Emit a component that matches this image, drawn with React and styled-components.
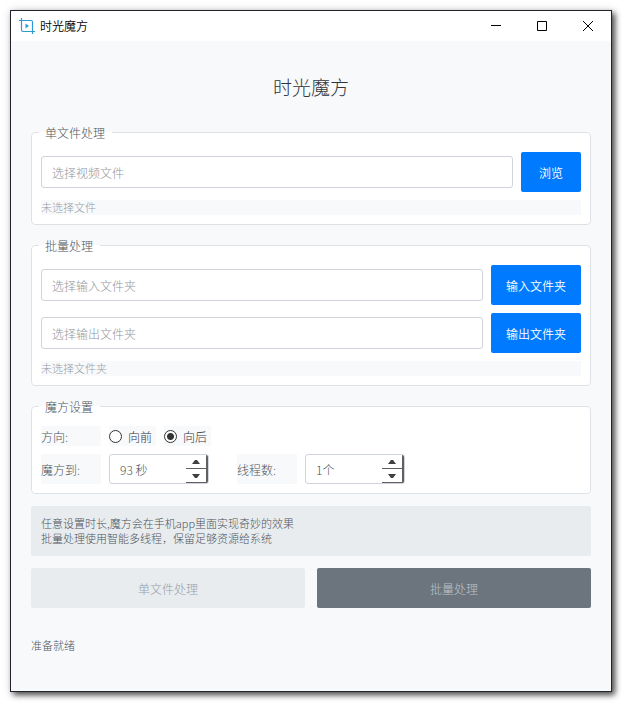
import React, { useId, useState } from "react";
import styled, { createGlobalStyle, css } from "styled-components";

const GlobalStyle = createGlobalStyle`
  *, *::before, *::after { box-sizing: border-box; }
  body { margin: 0; background: #fff; }
  body, button, input {
    font-family: "Noto Sans CJK SC", "Noto Sans", sans-serif;
    font-size: 12px;
    font-weight: 300;
  }
`;

const Desktop = styled.div`
  display: flex;
  min-height: 100vh;
  padding: 10px 11px 11px 10px;
`;

const Window = styled.div`
  display: flex;
  flex-direction: column;
  flex: 1;
  min-width: 0;
  border: 1px solid #23232b;
  background: #f8f9fb;
  box-shadow: 3px 3px 6px rgba(0, 0, 0, 0.7), 0 0 10px rgba(0, 0, 0, 0.1);
`;

const TitleBar = styled.header`
  display: flex;
  align-items: center;
  height: 30px;
  padding-left: 8px;
  background: #fff;
`;

const AppIcon = styled.svg`
  width: 16px;
  height: 16px;
  margin-right: 5px;
  fill: none;
  stroke: #2e9ad2;
`;

const WindowTitle = styled.span`
  flex: 1;
  color: #000;
  font-weight: 350;
  line-height: 16px;
`;

const WindowButton = styled.button`
  display: grid;
  place-items: center;
  width: 46px;
  height: 30px;
  padding: 0;
  border: 0;
  background: none;
  svg {
    width: 12px;
    height: 12px;
    fill: none;
    stroke: #000;
  }
  &:hover { background: #e5e5e5; }
`;

const Content = styled.main`
  display: flex;
  flex-direction: column;
  flex: 1;
  gap: 12px;
  padding: 20px;
`;

const Heading = styled.h1`
  margin: 0;
  padding-top: 1px;
  color: #2f353b;
  font-size: 19px;
  font-weight: 300;
  line-height: 50px;
  text-align: center;
`;

const Group = styled.fieldset`
  min-width: 0;
  margin: 0;
  padding: 0 7px;
  border: 1px solid #dee2e6;
  border-radius: 4px;
  background: #fff;
`;

const GroupTitle = styled.legend`
  padding: 0 7px 0 6px;
  color: #4c545c;
  line-height: 17px;
`;

const GroupBody = styled.div`
  display: flex;
  flex-direction: column;
  gap: 8px;
  padding: 11px 2px 9px;
`;

const Row = styled.div`
  display: flex;
  align-items: center;
  gap: 8px;
`;

const fieldBox = css`
  border: 1px solid #ced4da;
  border-radius: 3px;
  background: #fff;
`;

const PathInput = styled.input`
  ${fieldBox}
  flex: 1;
  min-width: 0;
  height: 32px;
  padding: 0 10px;
  color: #495057;
  &::placeholder { color: #92969a; opacity: 1; }
`;

const PickButton = styled.button`
  min-width: 60px;
  height: 40px;
  padding: 0 15px;
  border: 0;
  border-radius: 2px;
  background: #007bff;
  color: #fff;
  font-weight: 350;
`;

const Hint = styled.output`
  display: block;
  background: #f8f9fb;
  color: #959da6;
  font-size: 11px;
  line-height: 15px;
`;

const FieldLabel = styled.label`
  display: flex;
  align-items: center;
  align-self: stretch;
  width: 60px;
  background: #f8f9fb;
  color: #4c545c;
`;

const RadioLabel = styled.label`
  display: flex;
  align-items: center;
  gap: 6px;
  height: 20px;
  padding-right: 4px;
  background: #f8f9fb;
  color: #30363c;
`;

const Radio = styled.input`
  appearance: none;
  width: 13px;
  height: 13px;
  margin: 0;
  border: 1px solid #333;
  border-radius: 50%;
  background: #fff;
  &:checked { background: radial-gradient(circle, #333 3px, #fff 4px); }
`;

const Spinner = styled.div`
  ${fieldBox}
  display: flex;
  width: 100px;
  height: 30px;
  overflow: hidden;
`;

const SpinnerValue = styled.input`
  flex: 1;
  min-width: 0;
  padding: 0 10px;
  border: 0;
  background: none;
  color: #495057;
`;

const SpinnerArrows = styled.div`
  display: grid;
  grid-template-rows: 1fr 1fr;
  width: 22px;
`;

const ArrowButton = styled.button`
  display: grid;
  place-items: center;
  padding: 0;
  border: solid #606060;
  border-width: 0 2px 1px 0;
  background: #fff;
  svg {
    width: 8px;
    height: 4px;
    fill: #404040;
  }
`;

const Spaced = styled.div`
  display: flex;
  gap: 8px;
  height: 30px;
  margin-left: 20px;
`;

const Notice = styled.p`
  margin: 0;
  padding: 10px;
  border-radius: 2px;
  background: #e9ecef;
  color: #4c545c;
  font-size: 11px;
  line-height: 15px;
`;

const Actions = styled.div`
  display: grid;
  grid-template-columns: 1fr 1fr;
  gap: 12px;
`;

const ActionButton = styled.button`
  height: 40px;
  border: 0;
  border-radius: 2px;
  background: ${(p) => (p.$dark ? "#6c757d" : "#e9ecef")};
  color: ${(p) => (p.$dark ? "#bcc3ca" : "#959da6")};
`;

const StatusLine = styled.footer`
  display: flex;
  flex: 1;
  align-items: center;
  color: #4c545c;
  font-size: 11px;
  line-height: 15px;
`;

function PathRow({ placeholder, action }) {
  return (
    <Row>
      <PathInput type="text" placeholder={placeholder} aria-label={placeholder} />
      <PickButton type="button">{action}</PickButton>
    </Row>
  );
}

function NumberField({ label, initial, unit }) {
  const id = useId();
  const [value, setValue] = useState(initial);
  return (
    <>
      <FieldLabel htmlFor={id}>{label}</FieldLabel>
      <Spinner>
        <SpinnerValue
          id={id}
          type="text"
          value={`${value}${unit}`}
          onChange={(e) => setValue(parseInt(e.target.value, 10) || 0)}
        />
        <SpinnerArrows>
          <ArrowButton type="button" aria-label="增加" onClick={() => setValue(value + 1)}>
            <svg viewBox="0 0 8 4"><path d="M0 4 3 0h2l3 4z" /></svg>
          </ArrowButton>
          <ArrowButton
            type="button"
            aria-label="减少"
            onClick={() => setValue(Math.max(1, value - 1))}
          >
            <svg viewBox="0 0 8 4"><path d="M0 0h8L5 4H3z" /></svg>
          </ArrowButton>
        </SpinnerArrows>
      </Spinner>
    </>
  );
}

export default function App() {
  const [direction, setDirection] = useState("向后");
  return (
    <>
      <GlobalStyle />
      <Desktop>
        <Window>
          <TitleBar>
            <AppIcon viewBox="0 0 16 16" aria-hidden="true">
              <path strokeWidth="1.2" d="M0 2.5h12a1.5 1.5 0 0 1 1.5 1.5V16M2.5 0v12A1.5 1.5 0 0 0 4 13.5h12" />
              <path d="M6.5 5.5v5L10 8z" fill="#2e9ad2" stroke="none" />
            </AppIcon>
            <WindowTitle>时光魔方</WindowTitle>
            <WindowButton type="button" aria-label="最小化">
              <svg viewBox="0 0 12 12"><path d="M1 5.5h10" /></svg>
            </WindowButton>
            <WindowButton type="button" aria-label="最大化">
              <svg viewBox="0 0 12 12"><path d="M1.5 1.5h9v9h-9z" /></svg>
            </WindowButton>
            <WindowButton type="button" aria-label="关闭">
              <svg viewBox="0 0 12 12"><path d="m1 1 10 10M11 1 1 11" /></svg>
            </WindowButton>
          </TitleBar>
          <Content>
            <Heading>时光魔方</Heading>

            <Group>
              <GroupTitle>单文件处理</GroupTitle>
              <GroupBody>
                <PathRow placeholder="选择视频文件" action="浏览" />
                <Hint>未选择文件</Hint>
              </GroupBody>
            </Group>

            <Group>
              <GroupTitle>批量处理</GroupTitle>
              <GroupBody>
                <PathRow placeholder="选择输入文件夹" action="输入文件夹" />
                <PathRow placeholder="选择输出文件夹" action="输出文件夹" />
                <Hint>未选择文件夹</Hint>
              </GroupBody>
            </Group>

            <Group>
              <GroupTitle>魔方设置</GroupTitle>
              <GroupBody>
                <Row role="radiogroup" aria-labelledby="direction-label">
                  <FieldLabel as="span" id="direction-label">方向:</FieldLabel>
                  {["向前", "向后"].map((name) => (
                    <RadioLabel key={name}>
                      <Radio
                        type="radio"
                        name="direction"
                        checked={direction === name}
                        onChange={() => setDirection(name)}
                      />
                      {name}
                    </RadioLabel>
                  ))}
                </Row>
                <Row>
                  <NumberField label="魔方到:" initial={93} unit=" 秒" />
                  <Spaced>
                    <NumberField label="线程数:" initial={1} unit="个" />
                  </Spaced>
                </Row>
              </GroupBody>
            </Group>

            <Notice>
              任意设置时长,魔方会在手机app里面实现奇妙的效果
              <br />
              批量处理使用智能多线程，保留足够资源给系统
            </Notice>

            <Actions>
              <ActionButton type="button">单文件处理</ActionButton>
              <ActionButton type="button" $dark>批量处理</ActionButton>
            </Actions>

            <StatusLine>准备就绪</StatusLine>
          </Content>
        </Window>
      </Desktop>
    </>
  );
}
